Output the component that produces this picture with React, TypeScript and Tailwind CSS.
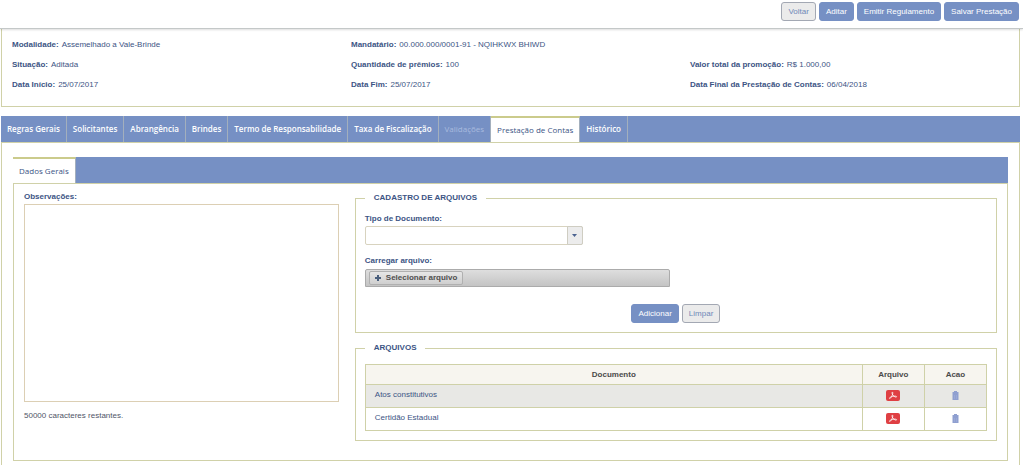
/**
 * Prestação de Contas page.
 */

import { useRef, useState } from "react";
import type { ReactNode } from "react";

interface SummaryItem {
  label: string;
  value: string;
}

const SUMMARY_COLUMNS: SummaryItem[][] = [
  [
    { label: "Modalidade:", value: "Assemelhado a Vale-Brinde" },
    { label: "Situação:", value: "Aditada" },
    { label: "Data Início:", value: "25/07/2017" },
  ],
  [
    { label: "Mandatário:", value: "00.000.000/0001-91 - NQIHKWX BHIWD" },
    { label: "Quantidade de prêmios:", value: "100" },
    { label: "Data Fim:", value: "25/07/2017" },
  ],
  [
    { label: "Valor total da promoção:", value: "R$ 1.000,00" },
    { label: "Data Final da Prestação de Contas:", value: "06/04/2018" },
  ],
];

const TABS = [
  "Regras Gerais",
  "Solicitantes",
  "Abrangência",
  "Brindes",
  "Termo de Responsabilidade",
  "Taxa de Fiscalização",
  "Validações",
  "Prestação de Contas",
  "Histórico",
];

const DISABLED_TAB = "Validações";

const FILES = ["Atos constitutivos", "Certidão Estadual"];

const MAX_CHARS = 50000;

function ActionButton({
  children,
  secondary = false,
}: {
  children: ReactNode;
  secondary?: boolean;
}) {
  return (
    <button
      type="button"
      className={`h-[19px] rounded-[3px] border px-[6px] text-[8px] leading-[10px] ${
        secondary
          ? "border-[#a3a8b3] bg-[#ebebeb] text-[#6f89b8]"
          : "border-[#7690c4] bg-[#7690c4] text-white"
      }`}
    >
      {children}
    </button>
  );
}

function Tab({
  label,
  active,
  disabled = false,
  onSelect,
}: {
  label: string;
  active: boolean;
  disabled?: boolean;
  onSelect?: () => void;
}) {
  const state = active
    ? "border-t-2 border-t-[#cbcb8c] bg-white font-medium text-[#3c5484]"
    : disabled
      ? "font-medium text-[#a9bbdf]"
      : "font-semibold text-white";

  return (
    <button
      type="button"
      role="tab"
      aria-selected={active}
      disabled={disabled}
      onClick={onSelect}
      className={`h-[26px] border-r border-r-[#a3afbd] px-[6px] font-['Open_Sans',sans-serif] text-[8px] leading-[12px] whitespace-nowrap ${state}`}
    >
      {label}
    </button>
  );
}

function PdfIcon() {
  return (
    <svg width="14" height="11" viewBox="0 0 14 11" aria-hidden="true">
      <rect width="14" height="11" rx="2" fill="#df3f43" />
      <path
        d="M6.4 2.1c.9.3.2 2.7-.9 4.6-.7 1.3-1.6 2.1-2 1.7-.5-.6 1.3-1.7 3.3-2.1 2-.4 3.9-.2 3.8.5-.2.8-2.2.1-3.4-1.3C6.1 4.300 5.600 2.200 6.400 2.100Z"
        fill="none"
        stroke="#fff"
        strokeWidth="0.8"
        strokeLinejoin="round"
      />
    </svg>
  );
}

function TrashIcon() {
  return (
    <svg width="7" height="9" viewBox="0 0 7 9" aria-hidden="true">
      <path
        d="M2 0h3v1h1.500v8H0.500V1H2Z"
        fill="#8f9fd0"
      />
      <path d="M2.500 4v4M4.500 4v4" stroke="#a5b2dc" strokeWidth="0.500" />
    </svg>
  );
}

function Fieldset({ title, children }: { title: string; children: ReactNode }) {
  return (
    <fieldset className="min-w-0 border border-[#d0d1a8] px-[9px] pt-[11px] pb-[9px]">
      <legend className="px-[9px] text-[8px] leading-[10px] font-bold">{title}</legend>
      {children}
    </fieldset>
  );
}

function UploadForm() {
  const fileRef = useRef<HTMLInputElement>(null);

  return (
    <Fieldset title="CADASTRO DE ARQUIVOS">
      <label htmlFor="tipo" className="block font-bold">
        Tipo de Documento:
      </label>
      <div className="relative mt-[2px] w-[35%]">
        <select
          id="tipo"
          className="block h-[19px] w-full appearance-none rounded-[2px] border border-[#d8d3bf] bg-white px-1"
        >
          <option value="" />
        </select>
        <span className="pointer-events-none absolute inset-y-0 right-0 flex w-4 items-center justify-center rounded-r-[2px] border border-[#cfcdc2] bg-[#ececec]">
          <svg width="5" height="3" viewBox="0 0 5 3" aria-hidden="true">
            <path d="M0 0h5L2.500 3Z" fill="#4c6390" />
          </svg>
        </span>
      </div>

      <label htmlFor="arquivo" className="mt-[11px] block font-bold">
        Carregar arquivo:
      </label>
      <input id="arquivo" ref={fileRef} type="file" className="hidden" />
      <div className="mt-[3px] flex h-[18px] w-[49%] items-center rounded-t-[2px] border border-[#ababab] bg-linear-to-b from-[#dedede] to-[#c4c4c4] px-[3px]">
        <button
          type="button"
          onClick={() => fileRef.current?.click()}
          className="flex h-[14px] items-center gap-[5px] rounded-[2px] border border-[#b0b0b0] bg-linear-to-b from-[#e6e6e6] to-[#cfcfcf] px-[5px] font-bold text-[#4f4f4f]"
        >
          <svg width="6" height="6" viewBox="0 0 6 6" aria-hidden="true">
            <path d="M3 0v6M0 3h6" stroke="#4a5f7d" strokeWidth="2" />
          </svg>
          Selecionar arquivo
        </button>
      </div>

      <div className="mt-[17px] flex justify-center gap-[3px]">
        <ActionButton>Adicionar</ActionButton>
        <ActionButton secondary>Limpar</ActionButton>
      </div>
    </Fieldset>
  );
}

function FilesTable() {
  return (
    <Fieldset title="ARQUIVOS">
      <table className="w-full table-fixed border-collapse border border-[#cfd1a8]">
        <thead>
          <tr className="h-5 bg-[#f7f5ef] text-[#4b4b4b]">
            <th className="border border-[#cfd1a8]">Documento</th>
            <th className="w-[10%] border border-[#cfd1a8]">Arquivo</th>
            <th className="w-[10%] border border-[#cfd1a8]">Acao</th>
          </tr>
        </thead>
        <tbody>
          {FILES.map((file) => (
            <tr key={file} className="h-[23px] odd:bg-[#e8e8e5]">
              <td className="border border-[#cfd1a8] px-[9px] pb-[2px]">{file}</td>
              <td className="border border-[#cfd1a8] pb-[2px]">
                <button type="button" aria-label={`Abrir ${file}`} className="mx-auto block">
                  <PdfIcon />
                </button>
              </td>
              <td className="border border-[#cfd1a8] pb-[2px]">
                <button type="button" aria-label={`Excluir ${file}`} className="mx-auto block">
                  <TrashIcon />
                </button>
              </td>
            </tr>
          ))}
        </tbody>
      </table>
    </Fieldset>
  );
}

export default function App() {
  const [activeTab, setActiveTab] = useState("Prestação de Contas");
  const [notes, setNotes] = useState("");

  return (
    <div className="flex min-h-screen flex-col bg-white font-['Liberation_Sans',Arial,sans-serif] text-[8px] leading-[10px] text-[#3c5484]">
      <header className="sticky top-0 z-10 flex h-[29px] justify-end gap-[3px] border-b border-[#c4c8c8] bg-white pt-[2px] pr-1 shadow-[0_1px_2px_#00000022]">
        <ActionButton secondary>Voltar</ActionButton>
        <ActionButton>Aditar</ActionButton>
        <ActionButton>Emitir Regulamento</ActionButton>
        <ActionButton>Salvar Prestação</ActionButton>
      </header>

      <main className="mr-[3px] ml-px flex flex-1 flex-col">
        <section className="grid grid-cols-3 border-x border-b border-[#d0d1a8] pt-[10px] pb-[15px]">
          {SUMMARY_COLUMNS.map((items, index) => (
            <dl
              key={items[0].label}
              className={`flex flex-col gap-2 pl-[10px] leading-[12px] ${index === 2 ? "pt-5" : ""}`}
            >
              {items.map(({ label, value }) => (
                <div key={label} className="flex gap-[3px]">
                  <dt className="font-bold">{label}</dt>
                  <dd>{value}</dd>
                </div>
              ))}
            </dl>
          ))}
        </section>

        <nav role="tablist" className="mt-[9px] flex bg-[#7690c4]">
          {TABS.map((tab) => (
            <Tab
              key={tab}
              label={tab}
              active={tab === activeTab}
              disabled={tab === DISABLED_TAB}
              onSelect={() => setActiveTab(tab)}
            />
          ))}
        </nav>

        <section className="flex-1 border-x border-t border-[#d0d1a8] px-[11px] pt-[14px]">
          <div role="tablist" className="flex bg-[#7690c4]">
            <Tab label="Dados Gerais" active />
          </div>

          <div className="grid grid-cols-[34%_66%] border border-[#d0d1a8] px-[10px] pt-2 pb-[19px]">
            <div className="mr-4">
              <label htmlFor="observacoes" className="block font-bold">
                Observações:
              </label>
              <textarea
                id="observacoes"
                value={notes}
                maxLength={MAX_CHARS}
                onChange={(event) => setNotes(event.target.value)}
                className="mt-[2px] block h-[198px] w-full resize-none border border-[#dccfb4] bg-white p-1"
              />
              <p className="mt-[9px] text-[#4f5568]">
                {MAX_CHARS - notes.length} caracteres restantes.
              </p>
            </div>

            <div className="flex flex-col gap-[10px] pt-px">
              <UploadForm />
              <FilesTable />
            </div>
          </div>
        </section>
      </main>
    </div>
  );
}
